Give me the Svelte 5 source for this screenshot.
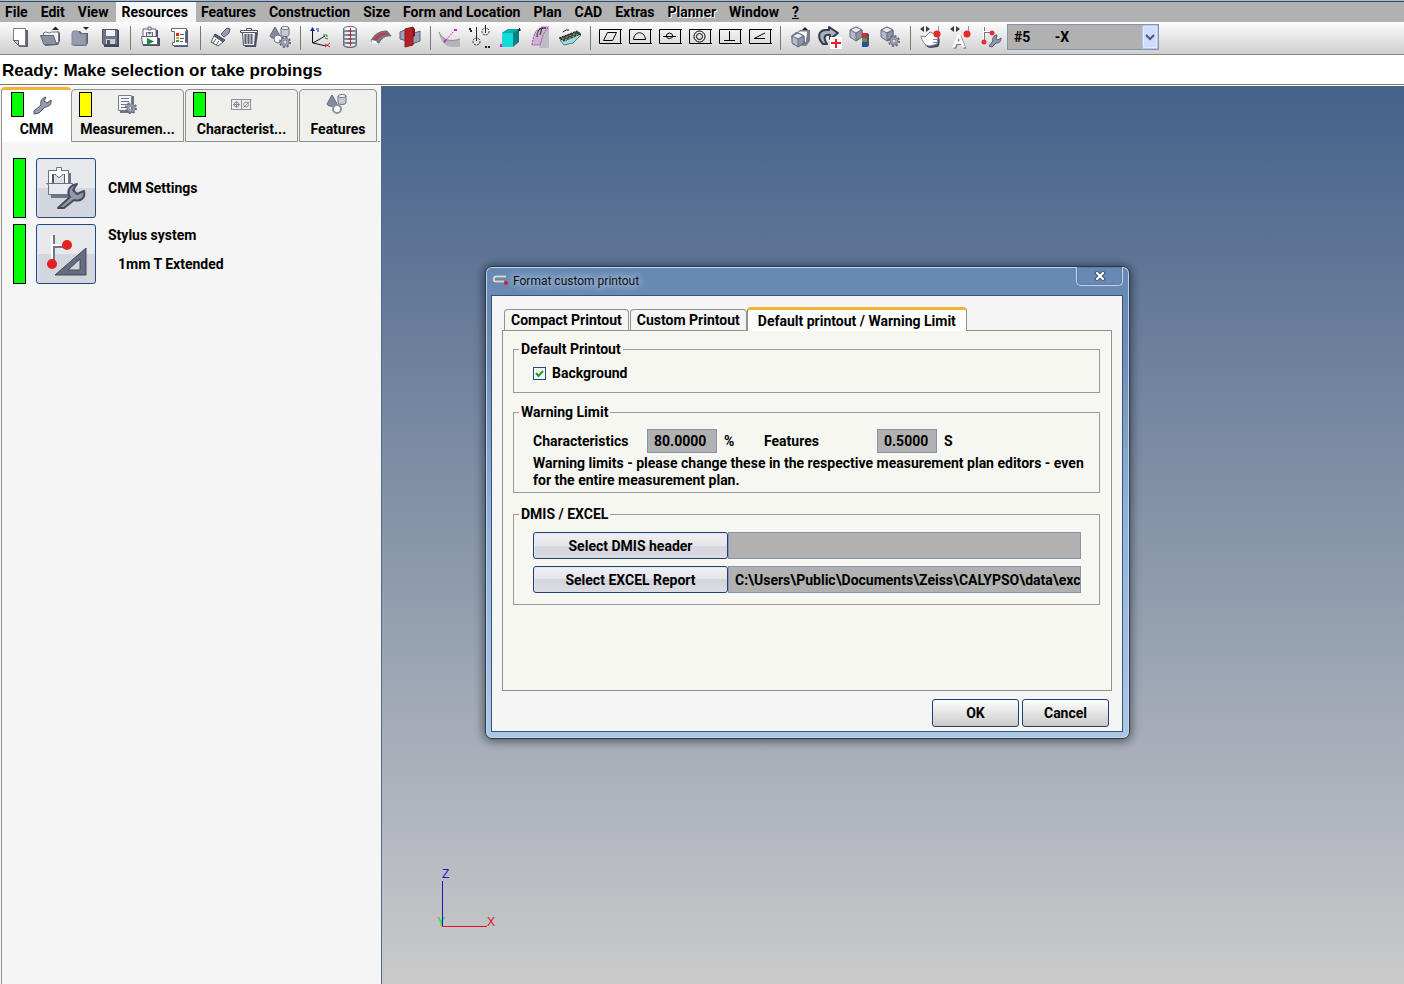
<script lang="ts">
	const menus = [
		'File',
		'Edit',
		'View',
		'Resources',
		'Features',
		'Construction',
		'Size',
		'Form and Location',
		'Plan',
		'CAD',
		'Extras',
		'Planner',
		'Window',
		'?'
	];

	const gear = (x: number, y: number) =>
		`<circle cx="${x}" cy="${y}" r="5" fill="none" stroke="#5d6478" stroke-width="2" stroke-dasharray="2 1.900"/><circle cx="${x}" cy="${y}" r="3" fill="none" stroke="#7b8294" stroke-width="3"/><circle cx="${x}" cy="${y}" r="3" fill="none" stroke="#a6acba"/>`;

	const cube = (x: number, y: number) =>
		`<g transform="translate(${x} ${y})" stroke="#646b7c" stroke-linejoin="round"><path d="M6 0l6 3v7l-6 4-6-4V3z" fill="#b4bac8"/><path d="M0 3l6-3 6 3-6 3z" fill="#e6e9ef"/><path d="M6 6v8l6-4V3z" fill="#8f96a8"/></g>`;

	const frame = '<path d="M27 7.500H4.500v14H27M25.500 7v15" fill="none" stroke="#000"/>';

	const wrench =
		'<path d="M6 21l7-6c-1-4 1-7 5-8l-2 4 3 2 4-3c1 4-2 7-6 7l-6 6-5 1z" fill="#959cac" stroke="#4e5567" stroke-linejoin="round"/>';

	const solids =
		'<path d="M10 5l-5 9c1 3 8 3 10 0z" fill="#858c9e" stroke="#5e6577"/><path d="M16 6v7c1 2 7 2 8 0V6z" fill="#c5cad4" stroke="#6b7284"/><ellipse cx="20" cy="6" rx="4" ry="1.500" fill="#fff" stroke="#6b7284"/>';

	const icons: Record<string, string> = {
		new: '<path d="M10 8h13v17H14z" fill="#5d6375"/><path d="M8.500 6.500h12v17h-7l-5-5z" fill="#fff" stroke="#777d8c"/><path d="M8.500 18.500h5v5z" fill="#c9ccd3" stroke="#5a6070"/>',
		open: '<path d="M10 24l13-1 2-4V11l-2-2-4 3H10z" fill="#555c6e"/><path d="M8.500 19v-8l2-1 4 1 2-1h7v11z" fill="#f4f5f8" stroke="#70778a"/><path d="M5.500 13.500h13l3 9H9z" fill="#8b92a4" stroke="#5e6577"/><path d="M17 8l3.500-3.500L24 8z" fill="#222"/>',
		folder: '<path d="M8 12l2-3h5l2 2h6v10l-2 3H9z" fill="#596073"/><path d="M7 11l1-2h5l2 3h6v11H7z" fill="#969daf" stroke="#8087a0"/><path d="M18 5h6l-3 3z" fill="#222"/>',
		save: '<path d="M8 8h16v17H9z" fill="#3f4657"/><path d="M7.500 7.500h15v15h-14l-1-1z" fill="#6d7488" stroke="#4d5467"/><path d="M11 8h9v6h-9z" fill="#f2f3f6"/><path d="M11 17h9v5h-9z" fill="#c9cdd6"/><path d="M12 18h3v4h-3z" fill="#4d5467"/>',
		run: '<path d="M8 24V15l2-7h13v8h2v8z" fill="#4b5264"/><path d="M8 7h13v9H8z" fill="#fff" stroke="#5d6478"/><path d="M11 10h7v5h-7z" fill="#5d6478"/><path d="M13 5h3v3h-3z" fill="#fff" stroke="#5d6478"/><path d="M12 10l2.500 2.500L17 10v4h-5z" fill="#dfe1e7"/><path d="M6.500 14.500h16v8h-15z" fill="#fff" stroke="#5d6478"/><path d="M12 16l7 3.500-7 3.500z" fill="#168a35"/>',
		list: '<path d="M9 8h14v17H9z" fill="#565d70"/><path d="M6.500 6.500h15v3h-1v11h2v3h-15v-3h2v-11h-3z" fill="#fff" stroke="#646b7d"/><path d="M11 11h3v3h-3z" fill="#e22"/><path d="M11 15h3v2h-3z" fill="#f0b020"/><path d="M11 18h3v2h-3z" fill="#2a9d4a"/><path d="M15 12.500h4M15 16.500h4M15 19.500h3" stroke="#5d6478"/>',
		brush: '<path d="M16 12l6-6 3 1-1 4-5 4z" fill="#999fae" stroke="#4e5567"/><path d="M10 12l10 6-2 2-9-6z" fill="#5a6174" stroke="#3f4658"/><path d="M9 14l9 6-5 4-7-4z" fill="#fff" stroke="#4e5567"/><path d="M8 21l3-4M11 23l3-4" stroke="#5a6174"/>',
		trash: '<path d="M8 11h15l-2 14H10z" fill="#4b5264"/><path d="M7.500 10.500h13l-1 13h-11z" fill="#eceef2" stroke="#4f5668"/><path d="M10.500 12v10M13.500 12v10M16.500 12v10" stroke="#596073" stroke-width="2"/><path d="M5.500 8.500h17v2h-17z" fill="#fff" stroke="#4f5668"/><path d="M11.500 8V6.500h5V8" fill="none" stroke="#4f5668"/>',
		solidsGear: solids + '<circle cx="13" cy="17" r="4" fill="#fff" stroke="#6b7284"/>' + gear(20, 20),
		axes: '<path d="M7.500 7v14M8 21l12-7M8 21l13 3" stroke="#111" fill="none"/><path d="M5 9l2.500-4L10 9z" fill="#1d2a9c"/><path d="M11 7h3M12 9h2" stroke="#1d2a9c"/><path d="M18 13h4v2M20 16l3 1" stroke="#178a38" fill="none"/><path d="M20 22l5 3M25 21l-5 4" stroke="#c22"/>',
		spring: '<path d="M8.500 7v16c3 3 10 3 13 0V7z" fill="#e8eaef" stroke="#6e7588"/><g fill="none" stroke="#5d6478"><ellipse cx="15" cy="7" rx="6.500" ry="2.500" fill="#fff"/><ellipse cx="15" cy="11" rx="6.500" ry="2.500"/><ellipse cx="15" cy="15" rx="6.500" ry="2.500"/><ellipse cx="15" cy="19" rx="6.500" ry="2.500"/><ellipse cx="15" cy="23" rx="6.500" ry="2.500"/></g><path d="M15.500 6v18" stroke="#cf2734"/>',
		arc: '<path d="M6 19c3-7 9-10 16-10l4 5c-6-1-10 3-12 7z" fill="#737a8d" stroke="#5c6375"/><path d="M8 18c3-5 8-8 14-7l2 2c-6-1-9 1-12 5z" fill="#c63742"/><path d="M6 18l5 1 2 3-5-1z" fill="#fff"/>',
		planes: '<path d="M5 10l7-3v12l-7-2z" fill="#9aa3b7" stroke="#5b6275"/><path d="M17 12l8-3v10l-8 3z" fill="#9aa3b7" stroke="#5b6275"/><path d="M10 7l8-2v18l-8 2z" fill="#b51f26" stroke="#8d1820"/><path d="M18 5l2 2v7l-2 1z" fill="#7e151b"/>',
		curve: '<path d="M4 10c4 9 12 10 21 7v8H15C8 23 5 17 4 10z" fill="#b4b4ba"/><path d="M4 10c4 9 12 10 21 7" fill="none" stroke="#888"/><path d="M11 18l9-10" stroke="#d31fd3" stroke-dasharray="2 1"/><path d="M19 8h3M9 20l2-2" stroke="#d31fd3" stroke-width="2"/>',
		points: '<g fill="none" stroke="#222"><path d="M11.500 5v14M20.500 3v8"/><path d="M4 7h2M5 9h2M20 25h2M23 25h2" stroke-width="2"/><circle cx="11.500" cy="19.500" r="3.500" stroke-dasharray="2 1"/><circle cx="20.500" cy="9.500" r="3.500" stroke-dasharray="2 1"/></g>',
		box: '<path d="M7 11l6-4h11v13l-6 5H7z" fill="#087f82"/><path d="M7 11h11v14H7z" fill="#12dcd9"/><path d="M7 11l6-4h11l-6 4z" fill="#08afb0"/><path d="M23 8h3M24.500 6v3" stroke="#111"/><path d="M6 22v3" stroke="#d31fd3" stroke-width="2"/>',
		surface: '<path d="M16 4h8v22H14z" fill="#bcbcc2"/><path d="M7 23c1-7 2-14 8-17h8c-5 4-6 11-8 17z" fill="#c9b6cb" stroke="#c437bf" stroke-dasharray="2 1"/><path d="M12 15c0-5 2-8 5-9h4M17 6l-2 7" fill="none" stroke="#222"/>',
		cloud: '<path d="M5 18l16-7 5 2-8 8-9 2z" fill="#9adbe1" stroke="#457c85"/><path d="M4 16l18-7 4 3-17 7z" fill="#344" stroke="#222" stroke-dasharray="2 1"/><path d="M7 17l15-6M10 18l14-6" stroke="#c6b16c" stroke-dasharray="2 2"/><path d="M8 10l3-2h3" fill="none" stroke="#111"/>',
		flatness: frame + '<path d="M8.500 18.500h9l4-8h-9z" fill="none" stroke="#000"/>',
		profile: frame + '<path d="M8.500 17.500h12c-1-9-11-9-12 0z" fill="none" stroke="#000"/>',
		position: frame + '<path d="M8 14.500h13M14.500 11a4 4 0 0 1 3.500 3.500 4 4 0 0 1-7 0 4 4 0 0 1 3.500-3.500z" fill="none" stroke="#000"/>',
		concentric: frame + '<g fill="none" stroke="#000"><circle cx="14.500" cy="14.500" r="5.500"/><circle cx="14.500" cy="14.500" r="3"/></g>',
		perpendicular: frame + '<path d="M14.500 9v9.500M9 18.500h11" fill="none" stroke="#000"/>',
		angularity: frame + '<path d="M20 11l-11 5.500h11" fill="none" stroke="#000"/>',
		cadOpen: '<path d="M8 23l-2-9 5-4h2l2-2h10v11l-4 5z" fill="#767d90"/><path d="M12 12l2-3h9l-2 12z" fill="#fff" stroke="#70778a"/><path d="M17 8l3-3 3 3z" fill="#222"/>' + cube(7, 11),
		update: '<path d="M8 22C2 16 3 8 11 8h3V5l9 6-8 6v-4c-6-1-7 3-3 9z" fill="#a8afbd" stroke="#343b4d" stroke-width="2" stroke-linejoin="round"/><path d="M15 15h12v12H15z" fill="#fff"/><path d="M21 17v9M16 21h10" stroke="#ed1c24" stroke-width="2"/>',
		cadColor: cube(5, 5) + '<path d="M17 11h5v5h-5z" fill="#cf2d37"/><path d="M17 16h5v4h-5z" fill="#55974b"/><path d="M17 20h5v5h-5z" fill="#234da5"/><path d="M22 11l2 1v12l-2 1z" fill="#4c5367"/>',
		cadGear: cube(6, 5) + gear(19, 19),
		hand: '<path d="M5 7l4-3v6zM15 7l-4-3v6z" fill="#383f50"/><path d="M9 15l7-4 8 4c1 2 1 8-1 10l-8 1c-5-1-7-6-6-11z" fill="#444b5c"/><path d="M6 14l4 1 5-5 5 2 3 3-1 7-7 2c-5 0-8-5-9-10z" fill="#fff" stroke="#808798"/><path d="M18 17.500h5M18 20.500h5" stroke="#808798"/><path d="M23.500 4v8" stroke="#9197a4"/><circle cx="22" cy="12" r="3.500" fill="#e52b25"/>',
		auto: '<path d="M5 7l4-3v6zM15 7l-4-3v6z" fill="#383f50"/><g font-family="Liberation Sans" font-weight="400" font-size="17"><text x="9" y="26" fill="#626a7c" stroke="#626a7c" aria-hidden="true">A</text><text x="8" y="25" fill="#fff" stroke="#fff">A</text></g><path d="M23.500 4v8" stroke="#9197a4"/><circle cx="22" cy="12" r="3.500" fill="#e52b25"/>',
		stylus: '<path d="M9.500 5v14M10 10.500h7" stroke="#737a8b"/><path d="M8.500 5v14M9 9.500h7" stroke="#fff"/><circle cx="17" cy="11" r="2.500" fill="#df3038"/><circle cx="9" cy="20" r="2.500" fill="#df3038"/><path d="M14 24l4-5c-1-3 1-6 4-6l-1 4 2 1 3-2c0 4-2 5-5 5l-4 4z" fill="#9299aa" stroke="#4e5567"/>',
		wrench,
		measurement: '<path d="M7 6h14v17H7z" fill="#6c7386"/><path d="M5.500 5.500h13v15h-13z" fill="#f5f5f8" stroke="#777e90"/><path d="M8 8.500h8M8 11.500h8M8 14.500h8M8 17.500h6" stroke="#6e7588"/>' + gear(18, 18),
		characteristic: '<g fill="none" stroke="#8b909a"><path d="M4.500 9.500h20M4.500 19.500h20M4.500 9v11M14.500 9v11M23.500 9v11"/><circle cx="9.500" cy="14.500" r="2.500"/><path d="M6 14.500h7M9.500 11v7M16.500 17.500l6-6"/><circle cx="19" cy="14.500" r="2.500"/></g>',
		features: '<g transform="translate(-1 0)">' + solids + '<circle cx="15" cy="19" r="4" fill="#fff" stroke="#8b91a0" stroke-width="2"/></g>'
	};

	const toolGroups = [
		['new', 'open', 'folder', 'save'],
		['run', 'list'],
		['brush', 'trash', 'solidsGear'],
		['axes', 'spring', 'arc', 'planes'],
		['curve', 'points', 'box', 'surface', 'cloud'],
		['flatness', 'profile', 'position', 'concentric', 'perpendicular', 'angularity'],
		['cadOpen', 'update', 'cadColor', 'cadGear'],
		['hand', 'auto', 'stylus']
	];

	const sideTabs = [
		{ label: 'CMM', icon: 'wrench', light: 'green', size: 'small' },
		{ label: 'Measuremen...', icon: 'measurement', light: 'yellow', size: 'large' },
		{ label: 'Characterist...', icon: 'characteristic', light: 'green', size: 'large' },
		{ label: 'Features', icon: 'features', light: '', size: 'medium' }
	];

	const dialogTabs = ['Compact Printout', 'Custom Printout', 'Default printout / Warning Limit'];

	let openMenu = $state('Resources');
	let sideTab = $state('CMM');
	let dialogTab = $state('Default printout / Warning Limit');
	let background = $state(true);
	let dialogOpen = $state(true);
</script>

{#snippet icon(name: string)}
	<svg width="30" height="30" viewBox="0 0 30 30" aria-hidden="true">{@html icons[name]}</svg>
{/snippet}

<div class="app">
	<nav class="menubar">
		{#each menus as menu}
			<button
				class:open={openMenu === menu}
				class:embossed={menu === 'Planner'}
				class:help={menu === '?'}
				onclick={() => (openMenu = menu)}>{menu}</button
			>
		{/each}
	</nav>

	<div class="toolbar">
		{#each toolGroups as group}
			<div class="group">
				{#each group as tool}
					<button aria-label={tool}>{@render icon(tool)}</button>
				{/each}
			</div>
		{/each}
		<div class="combo">
			<select aria-label="Stylus">
				<option>#5&nbsp;&nbsp;&nbsp;&nbsp;&nbsp;&nbsp;&nbsp;-X</option>
			</select>
			<span class="arrow">
				<svg width="14" height="22" viewBox="0 0 14 22"><path d="M3 9l4 4 4-4" fill="none" stroke="#43588c" stroke-width="2" /></svg>
			</span>
		</div>
	</div>

	<div class="status">Ready: Make selection or take probings</div>

	<div class="work">
		<aside>
			<div class="side-tabs">
				{#each sideTabs as tab}
					<button class="side-tab {tab.size}" class:active={sideTab === tab.label} onclick={() => (sideTab = tab.label)}>
						<span class="tab-top">
							{#if tab.light}<span class="light {tab.light}"></span>{/if}
							<span class="tab-icon">{@render icon(tab.icon)}</span>
						</span>
						<span>{tab.label}</span>
					</button>
				{/each}
				<span class="tab-rest"></span>
			</div>
			<div class="resources">
				<div class="resource">
					<span class="bar"></span>
					<button aria-label="CMM Settings">
						<svg width="58" height="58" viewBox="0 0 58 58">
							<path d="M14 14h20v12h4v13H14z" fill="#6d7485" />
							<path d="M11.500 11.500h20v14h-20z" fill="#fff" stroke="#6c7385" />
							<path d="M15 15h13v9H15z" fill="#4e5567" />
							<path d="M19.500 8.500h5v4h-5z" fill="#fff" stroke="#6c7385" />
							<path d="M17 15l5 4 5-4v9H17z" fill="#dfe1e7" />
							<path d="M19 12h6v4l-3 2-3-2z" fill="#fff" />
							<path d="M9.500 24.500h26v11h-24v-10z" fill="#e9eaef" stroke="#6c7385" />
							<path d="M21 49l12-11c-4-6 0-12 7-13l-4 6 4 4 7-3c2 7-4 11-10 9L27 49z" fill="#9299a9" stroke="#454c5d" stroke-width="2" stroke-linejoin="round" />
						</svg>
					</button>
					<span>CMM Settings</span>
				</div>
				<div class="resource">
					<span class="bar"></span>
					<button aria-label="Stylus system">
						<svg width="58" height="58" viewBox="0 0 58 58">
							<path d="M17 10v29M17 22h13" stroke="#6d7485" stroke-width="2" />
							<path d="M15 11v28M15 20h14" stroke="#fff" stroke-width="2" />
							<circle cx="30" cy="20" r="5" fill="#e32222" />
							<circle cx="15" cy="39" r="5" fill="#e32222" />
							<path d="M18 50l31-27v27zM31 45h12V34z" fill="#656c80" fill-rule="evenodd" stroke="#444b5d" />
						</svg>
					</button>
					<div class="stylus-text">
						<span>Stylus system</span>
						<span class="value">1mm T Extended</span>
					</div>
				</div>
			</div>
		</aside>

		<main>
			<svg class="axis" width="64" height="64" viewBox="0 0 64 64">
				<g font-family="Liberation Sans" font-size="12" font-weight="400">
					<text x="1" y="58" fill="#00e020">Y</text>
					<text x="6" y="10" fill="#1818c8">Z</text>
					<text x="51" y="58" fill="#e01020">X</text>
				</g>
				<path d="M6.500 13v46" stroke="#1818c8" />
				<path d="M6 58.500h45" stroke="#e01020" />
			</svg>

			{#if dialogOpen}
				<div class="dialog" role="dialog" aria-labelledby="dialog-title">
					<header>
						<svg width="17" height="14" viewBox="0 0 17 14">
							<path d="M14 3.500H4c-3 0-3 5 0 5h8" fill="none" stroke="#777" stroke-width="3" />
							<path d="M14 3.500H4c-3 0-3 5 0 5h8" fill="none" stroke="#d5d8dc" stroke-width="2" />
							<circle cx="14" cy="10" r="2" fill="#d81c22" />
						</svg>
						<span id="dialog-title">Format custom printout</span>
						<button class="close" aria-label="Close" onclick={() => (dialogOpen = false)}>
							<svg width="12" height="10" viewBox="0 0 12 10">
								<path d="M3 2l6 6M9 2L3 8" stroke="#46536a" stroke-width="4" stroke-linecap="square" />
								<path d="M3 2l6 6M9 2L3 8" stroke="#fff" stroke-width="2" stroke-linecap="square" />
							</svg>
						</button>
					</header>
					<div class="client">
						<div class="dialog-tabs">
							{#each dialogTabs as tab}
								<button class:active={dialogTab === tab} onclick={() => (dialogTab = tab)}>{tab}</button>
							{/each}
						</div>
						<div class="pane">
							<fieldset class="printout">
								<legend>Default Printout</legend>
								<label class="check"><input type="checkbox" bind:checked={background} />Background</label>
							</fieldset>
							<fieldset class="warning">
								<legend>Warning Limit</legend>
								<div class="limits">
									<label for="characteristics">Characteristics</label>
									<input id="characteristics" value="80.0000" readonly />
									<span class="unit">%</span>
									<label for="features">Features</label>
									<input id="features" value="0.5000" readonly />
									<span class="unit">S</span>
								</div>
								<p>
									Warning limits - please change these in the respective measurement plan editors - even<br />
									for the entire measurement plan.
								</p>
							</fieldset>
							<fieldset class="files">
								<legend>DMIS / EXCEL</legend>
								<div class="file">
									<button>Select DMIS header</button>
									<input aria-label="DMIS header" value="" readonly />
								</div>
								<div class="file">
									<button>Select EXCEL Report</button>
									<input aria-label="EXCEL report" value={'C:\\Users\\Public\\Documents\\Zeiss\\CALYPSO\\data\\exc'} readonly />
								</div>
							</fieldset>
						</div>
						<footer>
							<button onclick={() => (dialogOpen = false)}>OK</button>
							<button onclick={() => (dialogOpen = false)}>Cancel</button>
						</footer>
					</div>
				</div>
			{/if}
		</main>
	</div>
</div>

<style>
	:global(body) {
		background: #fff;
	}
	.app {
		display: flex;
		flex-direction: column;
		min-height: 100vh;
		color: #000;
		font: bold 14px/16px Roboto, Arial, sans-serif;
	}
	.app * {
		box-sizing: border-box;
	}
	button,
	input,
	select {
		margin: 0;
		padding: 0;
		border: 0;
		border-radius: 0;
		background: none;
		color: inherit;
		font: inherit;
	}
	svg {
		display: block;
		flex-shrink: 0;
	}

	.menubar {
		display: flex;
		height: 22px;
		border-top: 1px solid #a9bccb;
		background: #b1b1b1;
		box-shadow: inset 0 1px #34496a;
	}
	.menubar button {
		margin-top: 1px;
		padding: 0 8px 1px 5px;
		white-space: nowrap;
	}
	.menubar .open {
		background: #f5f5f5;
	}
	.menubar .embossed {
		text-shadow: 1px 1px #fff;
	}
	.menubar .help {
		text-decoration: underline;
	}

	.toolbar {
		display: flex;
		height: 33px;
		padding-left: 5px;
		border-bottom: 1px solid #858585;
		background: linear-gradient(#fdfdfd, #cecece);
	}
	.group {
		display: flex;
	}
	.group + .group {
		height: 24px;
		margin: 4px 0 0 5px;
		padding-left: 4px;
		border-left: 1px solid #777;
	}
	.group button {
		width: 30px;
		height: 30px;
	}
	.group + .group button {
		margin-top: -4px;
	}
	.combo {
		position: relative;
		width: 152px;
		height: 26px;
		margin: 2px 0 0 2px;
	}
	.combo select {
		width: 100%;
		height: 100%;
		padding-left: 6px;
		border: 1px solid #8296ae;
		background: #b1b1b1;
		appearance: none;
	}
	.arrow {
		position: absolute;
		top: 1px;
		right: 1px;
		border: 1px solid #b4c8f5;
		border-radius: 2px;
		background: #cfdcfb;
		box-shadow: inset 0 0 0 1px #e3ebff;
		pointer-events: none;
	}

	.status {
		height: 30px;
		padding-left: 2px;
		border-bottom: 1px solid #777;
		font-family: 'Liberation Sans', Arial, sans-serif;
		font-size: 17px;
		line-height: 31px;
	}

	.work {
		display: flex;
		flex: 1;
		padding-top: 1px;
	}
	aside {
		display: flex;
		flex-direction: column;
		width: 382px;
		padding: 1px 1px 0 1px;
		border-right: 1px solid #53688a;
		background: #f5f5f5;
	}
	.side-tabs {
		display: flex;
		align-items: flex-end;
		height: 55px;
	}
	.side-tab {
		display: flex;
		flex-direction: column;
		align-items: center;
		height: 53px;
		margin-right: 1px;
		padding-bottom: 4px;
		border: 1px solid #8d9191;
		border-radius: 4px 4px 0 0;
		background: #efefeb;
	}
	.side-tab.active {
		height: 55px;
		margin-right: 0;
		border-top: 3px solid #f5b335;
		border-right: 0;
		border-bottom: 0;
		background: #fff;
	}
	.small {
		width: 70px;
	}
	.medium {
		width: 78px;
	}
	.large {
		width: 113px;
	}
	.tab-rest {
		flex: 1;
		border-bottom: 1px solid #8d9191;
	}
	.tab-top {
		position: relative;
		display: flex;
		justify-content: center;
		width: 100%;
		height: 31px;
	}
	.active .tab-top {
		padding-left: 12px;
	}
	.light {
		position: absolute;
		top: 2px;
		left: 7px;
		width: 13px;
		height: 25px;
		border: 1px solid #000;
	}
	.active .light {
		left: 9px;
	}
	.green {
		background: #0f0;
	}
	.yellow {
		background: #ff0;
	}
	.resources {
		display: flex;
		flex: 1;
		flex-direction: column;
		gap: 6px;
		padding: 16px 0 0 11px;
		border-left: 1px solid #8d9191;
	}
	.resource {
		display: flex;
		align-items: center;
	}
	.bar {
		width: 13px;
		height: 60px;
		margin-right: 10px;
		border: 1px solid #000;
		background: #0f0;
	}
	.resource button {
		width: 60px;
		height: 60px;
		margin-right: 12px;
		border: 1px solid #26487a;
		border-radius: 3px;
		background: linear-gradient(#e7e8ec 50%, #d4d6dd 50%);
		box-shadow: inset 1px 1px #d7e8fa;
	}
	.stylus-text {
		display: flex;
		flex-direction: column;
		gap: 13px;
		height: 54px;
	}
	.value {
		padding-left: 10px;
	}

	main {
		position: relative;
		flex: 1;
		overflow: hidden;
		background: linear-gradient(#456189, #cacaca);
	}
	.axis {
		position: absolute;
		bottom: 52px;
		left: 54px;
	}
	.dialog {
		position: absolute;
		top: 180px;
		left: 103px;
		width: 645px;
		padding: 0 6px 6px 5px;
		border: 1px solid #263952;
		border-radius: 7px;
		background: linear-gradient(#6688b3, #718fb6 20%, #8fb0d6 50%, #acc7e5);
		box-shadow:
			inset 0 0 0 1px #c3d6eb,
			0 1px 8px 2px rgba(0, 0, 0, 0.45);
	}
	header {
		display: flex;
		height: 28px;
		padding: 6px 0 0 1px;
		color: #111;
		font: 12px/16px Roboto, 'Segoe UI', sans-serif;
	}
	header span {
		flex: 1;
		padding-left: 4px;
		text-shadow:
			0 0 6px #c3d6eb,
			0 0 10px #c3d6eb;
	}
	.close {
		display: flex;
		align-items: center;
		justify-content: center;
		width: 47px;
		height: 19px;
		margin-top: -6px;
		border: 1px solid #c3d6eb;
		border-top: 0;
		border-radius: 0 0 5px 5px;
		box-shadow: inset 0 0 0 1px #607b9e;
	}
	.client {
		padding: 11px 10px 4px;
		border: 1px solid #3a5274;
		background: #f5f5f5;
	}
	.dialog-tabs {
		display: flex;
		align-items: flex-end;
		height: 23px;
		padding-left: 2px;
	}
	.dialog-tabs button {
		height: 21px;
		margin-right: 1px;
		padding: 0 6px;
		border: 1px solid #929292;
		border-bottom: 0;
		border-radius: 4px 4px 0 0;
		background: #f5f5f5;
		white-space: nowrap;
	}
	.dialog-tabs .active {
		position: relative;
		height: 24px;
		margin: 0 0 -1px -1px;
		padding: 0 10px;
		border-top: 3px solid #f5b335;
		background: #fff;
	}
	.pane {
		min-height: 361px;
		padding: 10px 11px 70px 10px;
		border: 1px solid #929292;
		background: #f7f7f2;
	}
	fieldset {
		min-width: 0;
		margin: 0;
		padding: 0 18px 0 19px;
		border: 1px solid #9a9a9a;
	}
	legend {
		margin-left: -14px;
		padding: 0 2px;
	}
	.printout {
		height: 52px;
	}
	.check {
		display: flex;
		align-items: center;
		gap: 6px;
		margin-top: 8px;
	}
	.check input {
		width: 13px;
		height: 13px;
		border: 1px solid #26487a;
		background: #f4f5f5;
		appearance: none;
	}
	.check input:checked {
		background: #f4f5f5
			url("data:image/svg+xml,%3Csvg xmlns='http://www.w3.org/2000/svg' viewBox='0 0 11 11'%3E%3Cpath d='M2 5l2.500 3L9 3' fill='none' stroke='%2321a121' stroke-width='2'/%3E%3C/svg%3E");
	}
	.warning {
		height: 89px;
		margin-top: 11px;
	}
	.limits {
		display: grid;
		grid-template-columns: 114px 70px 47px 113px 60px 1fr;
		align-items: center;
		margin-top: 9px;
	}
	.limits input {
		width: 100%;
		height: 24px;
		padding-left: 6px;
		border: 1px solid #8296ae;
		background: #b1b1b1;
	}
	.unit {
		padding-left: 7px;
	}
	.warning p {
		margin: 2px -20px 0 0;
		overflow: hidden;
		line-height: 17px;
		white-space: nowrap;
	}
	.files {
		margin-top: 13px;
		padding-bottom: 11px;
	}
	.file {
		display: flex;
		margin-top: 7px;
	}
	legend + .file {
		margin-top: 10px;
	}
	.file button,
	.file input {
		height: 27px;
	}
	.file button,
	footer button {
		border: 1px solid #1d4270;
		border-radius: 3px;
	}
	.file button {
		width: 195px;
		background: linear-gradient(#f1f1f4, #e4e4e9 50%, #d3d4dc 50%, #dcdce2);
		box-shadow: inset 1px 1px #dcebfa;
	}
	.file input {
		flex: 1;
		min-width: 0;
		padding-left: 6px;
		border: 1px solid #8296ae;
		background: #b1b1b1;
	}
	footer {
		display: flex;
		justify-content: flex-end;
		gap: 3px;
		padding: 8px 3px 0 0;
	}
	footer button {
		width: 87px;
		height: 28px;
		background: linear-gradient(#fff, #c9c9c9);
	}
</style>
